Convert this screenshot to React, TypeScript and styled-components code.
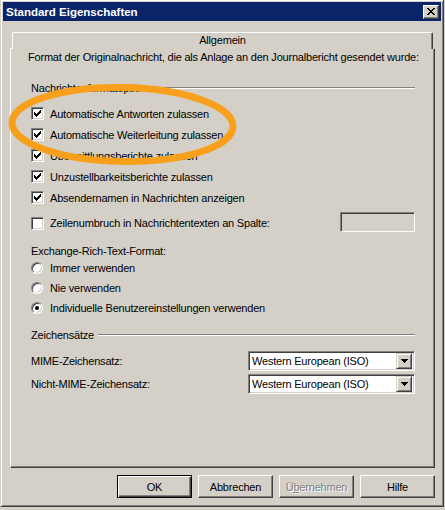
import React from 'react';
import styled, { createGlobalStyle } from 'styled-components';

const GlobalStyle = createGlobalStyle`
  html, body {
    margin: 0;
    padding: 0;
    background: #d4d0c8;
  }
  body {
    font-family: "Liberation Sans", Arial, sans-serif;
    font-size: 11px;
    letter-spacing: -0.2px;
    color: #000;
  }
`;

const Stage = styled.div`
  position: relative;
  width: 445px;
  height: 510px;
  overflow: hidden;
`;

const Window = styled.div`
  width: 444px;
  box-sizing: border-box;
  margin-top: -1px;
  border: 1px solid;
  border-color: #d4d0c8 #404040 #404040 #d4d0c8;
  box-shadow: inset 1px 1px #fff, inset -1px -1px #808080;
  padding: 2px;
  background: #d4d0c8;
`;

const TitleBar = styled.div`
  height: 19px;
  background: #0a246a;
  display: flex;
  align-items: center;
  justify-content: space-between;
  padding: 0 2px 0 3px;
`;

const TitleText = styled.span`
  color: #fff;
  font-weight: bold;
  font-size: 11.5px;
  letter-spacing: 0;
`;

const CaptionButton = styled.div`
  width: 16px;
  height: 14px;
  box-sizing: border-box;
  background: #d4d0c8;
  border: 1px solid;
  border-color: #fff #404040 #404040 #fff;
  box-shadow: inset -1px -1px #808080;
  display: flex;
  align-items: center;
  justify-content: center;
  padding: 0 1px 1px 0;
`;

const Body = styled.div`
  padding: 11px 6px 6px 7px;
`;

const TabStrip = styled.div`
  display: flex;
`;

const Tab = styled.div`
  position: relative;
  z-index: 1;
  flex: 1;
  margin: 0 2px -1px;
  height: 17px;
  box-sizing: border-box;
  background: #d4d0c8;
  border-top: 1px solid #fff;
  border-left: 1px solid #fff;
  border-right: 1px solid #404040;
  border-radius: 2px 2px 0 0;
  box-shadow: inset -1px 0 #808080;
  text-align: center;
  line-height: 15px;
`;

const Panel = styled.div`
  height: 420px;
  box-sizing: border-box;
  border: 1px solid;
  border-color: #fff #404040 #404040 #fff;
  box-shadow: inset -1px -1px #808080;
  padding: 0 19px 0 20px;
  display: flex;
  flex-direction: column;
`;

const Intro = styled.div`
  margin-left: -3px;
  height: 16px;
  line-height: 16px;
  white-space: nowrap;
`;

const GroupHeader = styled.div<{ $top: number }>`
  margin-top: ${(p) => p.$top}px;
  height: 14px;
  display: flex;
  align-items: center;
  gap: 4px;
  white-space: nowrap;

  &::after {
    content: '';
    flex: 1;
    border-top: 1px solid #808080;
    border-bottom: 1px solid #fff;
  }
`;

const Label = styled.div<{ $top?: number }>`
  margin-top: ${(p) => p.$top ?? 0}px;
  height: 14px;
  line-height: 14px;
  white-space: nowrap;
`;

const OptionRow = styled.div<{ $height: number; $top?: number }>`
  display: flex;
  align-items: center;
  height: ${(p) => p.$height}px;
  margin-top: ${(p) => p.$top ?? 0}px;
  gap: 6px;
  white-space: nowrap;
`;

const Box = styled.div`
  width: 13px;
  height: 13px;
  box-sizing: border-box;
  flex: none;
  background: #fff;
  border: 1px solid;
  border-color: #808080 #fff #fff #808080;
  box-shadow: inset 1px 1px #404040, inset -1px -1px #d4d0c8;
  position: relative;
`;

const Round = styled.div`
  width: 12px;
  height: 12px;
  box-sizing: border-box;
  flex: none;
  border-radius: 50%;
  background: #fff;
  border: 1px solid;
  border-color: #808080 #fff #fff #808080;
  box-shadow: inset 1px 1px #404040, inset -1px -1px #d4d0c8;
  display: flex;
  align-items: center;
  justify-content: center;
  margin-right: 1px;
`;

const Dot = styled.div`
  width: 4px;
  height: 4px;
  border-radius: 50%;
  background: #000;
`;

const DisabledField = styled.div`
  margin-left: auto;
  margin-top: -3px;
  width: 75px;
  height: 20px;
  box-sizing: border-box;
  background: #d4d0c8;
  border: 1px solid;
  border-color: #808080 #fff #fff #808080;
  box-shadow: inset 1px 1px #404040, inset -1px -1px #d4d0c8;
`;

const FieldRow = styled.div<{ $top: number }>`
  display: flex;
  align-items: center;
  justify-content: space-between;
  height: 20px;
  margin-top: ${(p) => p.$top}px;
  white-space: nowrap;
`;

const Combo = styled.div`
  width: 167px;
  height: 20px;
  box-sizing: border-box;
  background: #fff;
  border: 1px solid;
  border-color: #808080 #fff #fff #808080;
  box-shadow: inset 1px 1px #404040, inset -1px -1px #d4d0c8;
  padding: 2px 2px 2px 3px;
  display: flex;
  align-items: center;
  justify-content: space-between;
`;

const DropButton = styled.div`
  width: 16px;
  height: 16px;
  box-sizing: border-box;
  margin-top: -2px;
  margin-bottom: -2px;
  background: #d4d0c8;
  border: 1px solid;
  border-color: #d4d0c8 #404040 #404040 #d4d0c8;
  box-shadow: inset 1px 1px #fff, inset -1px -1px #808080;
  display: flex;
  align-items: center;
  justify-content: center;
`;

const ButtonRow = styled.div`
  display: flex;
  justify-content: flex-end;
  gap: 6px;
  margin-top: 7px;
`;

const Button = styled.div<{ $default?: boolean; $disabled?: boolean }>`
  width: 75px;
  height: 23px;
  box-sizing: border-box;
  background: #d4d0c8;
  border: 1px solid;
  border-color: ${(p) => (p.$default ? '#000' : '#fff #404040 #404040 #fff')};
  box-shadow: ${(p) =>
    p.$default
      ? 'inset 1px 1px #fff, inset -1px -1px #404040, inset -2px -2px #808080'
      : 'inset -1px -1px #808080'};
  display: flex;
  align-items: center;
  justify-content: center;
  color: ${(p) => (p.$disabled ? '#808080' : '#000')};
  text-shadow: ${(p) => (p.$disabled ? '1px 1px #fff' : 'none')};
`;

const AccessKey = styled.span`
  text-decoration: underline;
`;

const Overlay = styled.svg`
  position: absolute;
  left: 0;
  top: 0;
  pointer-events: none;
`;

const CheckMark = () => (
  <svg width="7" height="7" viewBox="0 0 7 7" shapeRendering="crispEdges" style={{ position: 'absolute', left: 2, top: 2 }}>
    {[2, 3, 4, 3, 2, 1, 0].map((y, x) => (
      <rect key={x} x={x} y={y} width="1" height="3" fill="#000" />
    ))}
  </svg>
);

const CloseGlyph = () => (
  <svg width="8" height="7" viewBox="0 0 8 7" shapeRendering="crispEdges">
    <path d="M0 0h2v1h-2zM6 0h2v1h-2zM1 1h2v1h-2zM5 1h2v1h-2zM2 2h4v1h-4zM3 3h2v1h-2zM2 4h4v1h-4zM1 5h2v1h-2zM5 5h2v1h-2zM0 6h2v1h-2zM6 6h2v1h-2z" fill="#000" />
  </svg>
);

const DownArrow = () => (
  <svg width="7" height="4" viewBox="0 0 7 4" shapeRendering="crispEdges">
    <path d="M0 0h7v1h-7zM1 1h5v1h-5zM2 2h3v1h-3zM3 3h1v1h-1z" fill="#000" />
  </svg>
);

const Checkbox: React.FC<{ checked?: boolean; label: string; top?: number; children?: React.ReactNode }> = ({
  checked,
  label,
  top,
  children,
}) => (
  <OptionRow $height={children ? 24 : 21} $top={top}>
    <Box>{checked && <CheckMark />}</Box>
    <span>{label}</span>
    {children}
  </OptionRow>
);

const Radio: React.FC<{ checked?: boolean; label: string }> = ({ checked, label }) => (
  <OptionRow $height={20}>
    <Round>{checked && <Dot />}</Round>
    <span>{label}</span>
  </OptionRow>
);

const options = [
  { label: 'Automatische Antworten zulassen', checked: true },
  { label: 'Automatische Weiterleitung zulassen', checked: true },
  { label: 'Übermittlungsberichte zulassen', checked: true },
  { label: 'Unzustellbarkeitsberichte zulassen', checked: true },
  { label: 'Absendernamen in Nachrichten anzeigen', checked: true },
];

const App: React.FC = () => (
  <Stage>
    <GlobalStyle />
    <Window>
      <TitleBar>
        <TitleText>Standard Eigenschaften</TitleText>
        <CaptionButton>
          <CloseGlyph />
        </CaptionButton>
      </TitleBar>
      <Body>
        <TabStrip>
          <Tab>Allgemein</Tab>
        </TabStrip>
        <Panel>
          <Intro>Format der Originalnachricht, die als Anlage an den Journalbericht gesendet wurde:</Intro>

          <GroupHeader $top={16}>Nachrichtenformatoptionen</GroupHeader>
          <div style={{ height: 8 }} />
          {options.map((o) => (
            <Checkbox key={o.label} label={o.label} checked={o.checked} />
          ))}
          <Checkbox label="Zeilenumbruch in Nachrichtentexten an Spalte:" top={3}>
            <DisabledField />
          </Checkbox>

          <Label $top={9}>Exchange-Rich-Text-Format:</Label>
          <Radio label="Immer verwenden" />
          <Radio label="Nie verwenden" />
          <Radio label="Individuelle Benutzereinstellungen verwenden" checked />

          <GroupHeader $top={10}>Zeichensätze</GroupHeader>
          <FieldRow $top={9}>
            <span>MIME-Zeichensatz:</span>
            <Combo>
              <span>Western European (ISO)</span>
              <DropButton>
                <DownArrow />
              </DropButton>
            </Combo>
          </FieldRow>
          <FieldRow $top={3}>
            <span>Nicht-MIME-Zeichensatz:</span>
            <Combo>
              <span>Western European (ISO)</span>
              <DropButton>
                <DownArrow />
              </DropButton>
            </Combo>
          </FieldRow>
        </Panel>
        <ButtonRow>
          <Button $default>OK</Button>
          <Button>Abbrechen</Button>
          <Button $disabled>
            Ü<AccessKey>b</AccessKey>ernehmen
          </Button>
          <Button>Hilfe</Button>
        </ButtonRow>
      </Body>
    </Window>
    <Overlay width="445" height="510" viewBox="0 0 445 510">
      <ellipse cx="122.5" cy="124.5" rx="110.5" ry="37" fill="none" stroke="#f8a01c" strokeWidth="7" transform="rotate(1 122.5 124.5)" />
    </Overlay>
  </Stage>
);

export default App;
